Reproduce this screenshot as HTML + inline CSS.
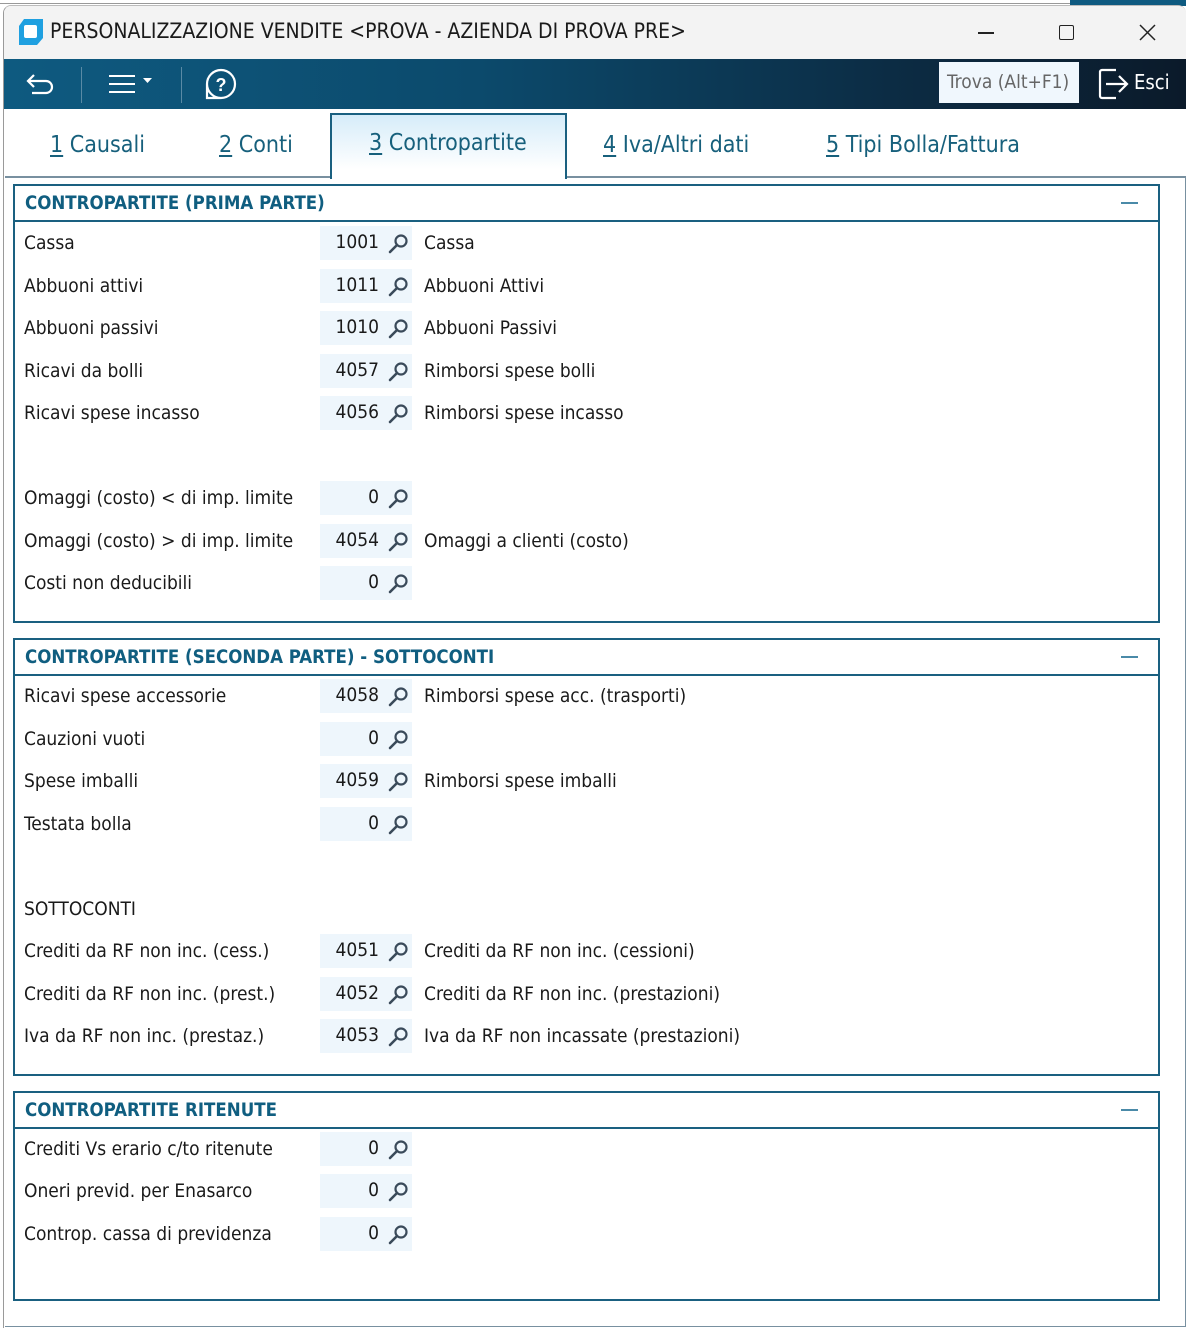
<!DOCTYPE html>
<html><head><meta charset="utf-8"><style>
*{margin:0;padding:0;box-sizing:border-box}
body{width:1186px;height:1328px;position:relative;background:#fff;font-family:"DejaVu Sans Condensed","Liberation Sans",sans-serif;overflow:hidden;color:#1a1a1a}
.abs{position:absolute}
.win{position:absolute;left:3px;top:5px;width:1183px;height:1323px;border-left:1px solid #9a9a9a;border-top:1px solid #bbb;border-radius:8px 8px 0 0;background:#fff;overflow:hidden}
.title{position:absolute;left:0;top:0;width:100%;height:53px;background:#f3f3f3}
.tb{position:absolute;left:0;top:53px;width:100%;height:50px;background:linear-gradient(90deg,#0e5a80 0%,#0c4a6c 40%,#0c2c44 75%,#0b1a2a 100%)}
.tab{position:absolute;top:145px;font-size:23px;color:#17607c;transform:translateY(-50%)}
.tab u{text-decoration:underline;text-underline-offset:3px}
.sec{position:absolute;left:13px;width:1147px;border:2px solid #1a6080;background:#fff}
.sh{height:36px;border-bottom:2px solid #1a6080;font-weight:bold;font-size:18.5px;color:#105e80;padding:7px 0 0 10px;position:relative}
.sh:after{content:"";position:absolute;right:20px;top:16px;width:17px;height:2px;background:#4a8aa8}
.lbl{position:absolute;left:24px;font-size:19px;transform:translateY(-50%);white-space:nowrap}
.fld{position:absolute;left:320px;width:92px;height:34px;background:#eef6fc}
.fld span{position:absolute;right:33px;top:5px;font-size:19px}
.fld svg{position:absolute;right:4px;top:8px}
.desc{position:absolute;left:424px;font-size:19px;transform:translateY(-50%);white-space:nowrap}
</style></head><body>
<div class="abs" style="left:0;top:3px;width:1070px;height:1px;background:#999"></div>
<div class="abs" style="left:1070px;top:0;width:116px;height:6px;background:#0e5a80"></div>
<div class="win">
<div class="title">
<svg class="abs" style="left:13px;top:12px" width="28" height="28" viewBox="0 0 28 28"><path d="M7 1h19v19l-6 7H2V8z" fill="#1fa0e0"/><rect x="7" y="7" width="13" height="13" rx="2" fill="#fff"/></svg>
<div class="abs" style="left:46px;top:13px;font-size:21px;color:#1a1a1a">PERSONALIZZAZIONE VENDITE &lt;PROVA - AZIENDA DI PROVA PRE&gt;</div>
<div class="abs" style="left:974px;top:26px;width:16px;height:1.5px;background:#222"></div>
<div class="abs" style="left:1055px;top:19px;width:15px;height:15px;border:1.5px solid #222;border-radius:2px"></div>
<svg class="abs" style="left:1135px;top:18px" width="17" height="17"><path d="M1 1L16 16M16 1L1 16" stroke="#222" stroke-width="1.5"/></svg>
</div>
<div class="tb">
<svg class="abs" style="left:20px;top:10px" width="36" height="30" viewBox="0 0 36 30"><path d="M10 6L4 12l6 6M4 12h18a6 6 0 0 1 0 12H8" fill="none" stroke="#fff" stroke-width="2.2"/></svg>
<div class="abs" style="left:77px;top:8px;width:1px;height:36px;background:#5a8aa5"></div>
<div class="abs" style="left:105px;top:16px;width:26px;height:2px;background:#fff;box-shadow:0 8px 0 #fff,0 16px 0 #fff"></div>
<svg class="abs" style="left:139px;top:19px" width="10" height="6"><path d="M0 0h9L4.5 5z" fill="#fff"/></svg>
<div class="abs" style="left:177px;top:8px;width:1px;height:36px;background:#5a8aa5"></div>
<svg class="abs" style="left:200px;top:8px" width="34" height="34" viewBox="0 0 34 34"><path d="M17 3a14 14 0 1 1 -14 14V31h14" fill="none" stroke="#fff" stroke-width="2.2"/><path d="M17 3a14 14 0 0 0 -14 14" fill="none" stroke="#fff" stroke-width="2.2"/><text x="17" y="24" font-size="18" font-weight="bold" fill="#fff" text-anchor="middle" font-family="Liberation Sans">?</text></svg>
<div class="abs" style="left:935px;top:3px;width:140px;height:41px;background:#f0f7fd;color:#666;font-size:19px;padding:9px 0 0 8px">Trova (Alt+F1)</div>
<svg class="abs" style="left:1094px;top:8px" width="34" height="34" viewBox="0 0 34 34"><path d="M18 3H4a2 2 0 0 0-2 2v24a2 2 0 0 0 2 2h14" fill="none" stroke="#fff" stroke-width="2.2"/><path d="M8 17h20M21 9l8 8-8 8" fill="none" stroke="#fff" stroke-width="2.2"/></svg>
<div class="abs" style="left:1130px;top:11px;color:#fff;font-size:20px">Esci</div>
</div>
<div class="abs" style="left:1px;top:170px;width:1181px;height:1151px;border:2px solid #7890a0;border-left:none;border-right:1px solid #7890a0;border-bottom:1px solid #7890a0"></div>
<div class="abs" style="left:326px;top:107px;width:237px;height:66px;background:linear-gradient(#d6ecf9,#fff 85%);border:2px solid #1a6080;border-bottom:none"></div>
</div>
<div class="tab" style="left:50px"><u>1</u> Causali</div>
<div class="tab" style="left:219px"><u>2</u> Conti</div>
<div class="tab" style="left:369px;top:143px"><u>3</u> Contropartite</div>
<div class="tab" style="left:603px"><u>4</u> Iva/Altri dati</div>
<div class="tab" style="left:826px"><u>5</u> Tipi Bolla/Fattura</div>

<div class="sec" style="top:184px;height:439px"><div class="sh">CONTROPARTITE (PRIMA PARTE)</div></div>
<div class="sec" style="top:638px;height:438px"><div class="sh">CONTROPARTITE (SECONDA PARTE) - SOTTOCONTI</div></div>
<div class="sec" style="top:1091px;height:210px"><div class="sh">CONTROPARTITE RITENUTE</div></div>

<svg width="0" height="0" style="position:absolute"><defs><g id="m"><circle cx="13" cy="7" r="5.5" fill="none" stroke="#3a4a5a" stroke-width="2.2"/><path d="M9 11L2 18" stroke="#3a4a5a" stroke-width="2.6" stroke-linecap="round"/></g></defs></svg>

<div class="lbl" style="top:243px">Cassa</div><div class="fld" style="top:226px"><span>1001</span><svg width="20" height="20"><use href="#m"/></svg></div><div class="desc" style="top:243px">Cassa</div>
<div class="lbl" style="top:286px">Abbuoni attivi</div><div class="fld" style="top:269px"><span>1011</span><svg width="20" height="20"><use href="#m"/></svg></div><div class="desc" style="top:286px">Abbuoni Attivi</div>
<div class="lbl" style="top:328px">Abbuoni passivi</div><div class="fld" style="top:311px"><span>1010</span><svg width="20" height="20"><use href="#m"/></svg></div><div class="desc" style="top:328px">Abbuoni Passivi</div>
<div class="lbl" style="top:371px">Ricavi da bolli</div><div class="fld" style="top:354px"><span>4057</span><svg width="20" height="20"><use href="#m"/></svg></div><div class="desc" style="top:371px">Rimborsi spese bolli</div>
<div class="lbl" style="top:413px">Ricavi spese incasso</div><div class="fld" style="top:396px"><span>4056</span><svg width="20" height="20"><use href="#m"/></svg></div><div class="desc" style="top:413px">Rimborsi spese incasso</div>
<div class="lbl" style="top:498px">Omaggi (costo) &lt; di imp. limite</div><div class="fld" style="top:481px"><span>0</span><svg width="20" height="20"><use href="#m"/></svg></div>
<div class="lbl" style="top:541px">Omaggi (costo) &gt; di imp. limite</div><div class="fld" style="top:524px"><span>4054</span><svg width="20" height="20"><use href="#m"/></svg></div><div class="desc" style="top:541px">Omaggi a clienti (costo)</div>
<div class="lbl" style="top:583px">Costi non deducibili</div><div class="fld" style="top:566px"><span>0</span><svg width="20" height="20"><use href="#m"/></svg></div>

<div class="lbl" style="top:696px">Ricavi spese accessorie</div><div class="fld" style="top:679px"><span>4058</span><svg width="20" height="20"><use href="#m"/></svg></div><div class="desc" style="top:696px">Rimborsi spese acc. (trasporti)</div>
<div class="lbl" style="top:739px">Cauzioni vuoti</div><div class="fld" style="top:722px"><span>0</span><svg width="20" height="20"><use href="#m"/></svg></div>
<div class="lbl" style="top:781px">Spese imballi</div><div class="fld" style="top:764px"><span>4059</span><svg width="20" height="20"><use href="#m"/></svg></div><div class="desc" style="top:781px">Rimborsi spese imballi</div>
<div class="lbl" style="top:824px">Testata bolla</div><div class="fld" style="top:807px"><span>0</span><svg width="20" height="20"><use href="#m"/></svg></div>
<div class="lbl" style="top:909px">SOTTOCONTI</div>
<div class="lbl" style="top:951px">Crediti da RF non inc. (cess.)</div><div class="fld" style="top:934px"><span>4051</span><svg width="20" height="20"><use href="#m"/></svg></div><div class="desc" style="top:951px">Crediti da RF non inc. (cessioni)</div>
<div class="lbl" style="top:994px">Crediti da RF non inc. (prest.)</div><div class="fld" style="top:977px"><span>4052</span><svg width="20" height="20"><use href="#m"/></svg></div><div class="desc" style="top:994px">Crediti da RF non inc. (prestazioni)</div>
<div class="lbl" style="top:1036px">Iva da RF non inc. (prestaz.)</div><div class="fld" style="top:1019px"><span>4053</span><svg width="20" height="20"><use href="#m"/></svg></div><div class="desc" style="top:1036px">Iva da RF non incassate (prestazioni)</div>

<div class="lbl" style="top:1149px">Crediti Vs erario c/to ritenute</div><div class="fld" style="top:1132px"><span>0</span><svg width="20" height="20"><use href="#m"/></svg></div>
<div class="lbl" style="top:1191px">Oneri previd. per Enasarco</div><div class="fld" style="top:1174px"><span>0</span><svg width="20" height="20"><use href="#m"/></svg></div>
<div class="lbl" style="top:1234px">Controp. cassa di previdenza</div><div class="fld" style="top:1217px"><span>0</span><svg width="20" height="20"><use href="#m"/></svg></div>
</body></html>
